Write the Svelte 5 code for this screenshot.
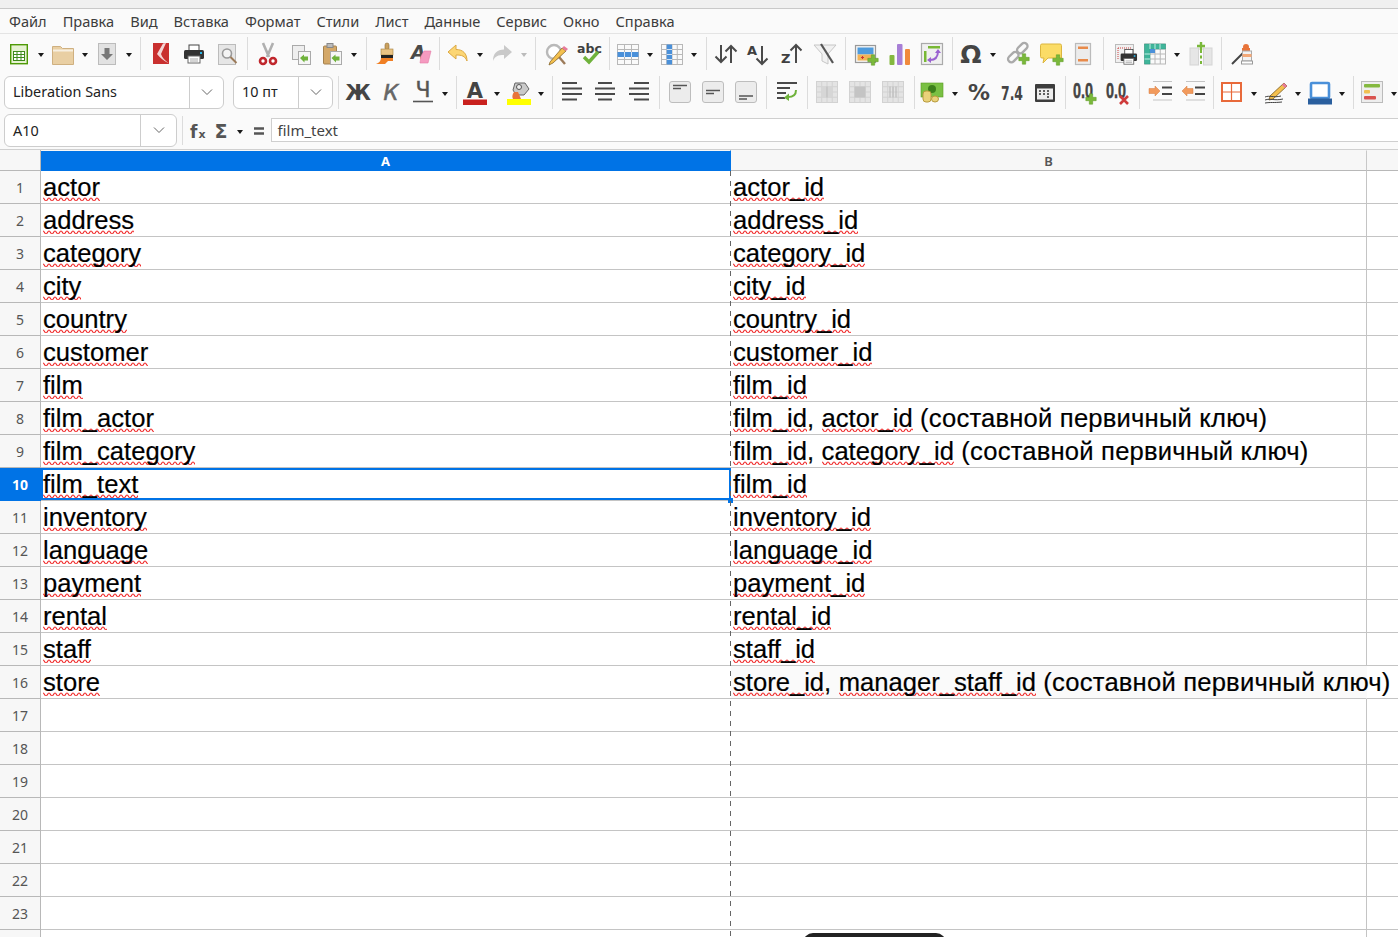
<script>
  const plus = (x, y, c = '#7ab83a') =>
    `<path d="M${x - 1.7} ${y - 5.2}h3.4v3.5h3.5v3.4h-3.5v3.5h-3.4v-3.5h-3.5v-3.4h3.5z" fill="${c}" stroke="#5d9a25" stroke-width=".5"/>`;
  const cross = (x, y) =>
    `<path d="M${x - 4} ${y - 4}l8 8M${x + 4} ${y - 4}l-8 8" stroke="#cf3b3b" stroke-width="2.6"/>`;
  const txt = (s, x, y, size, fill = '#404040', extra = '') =>
    `<text x="${x}" y="${y}" font-size="${size}" fill="${fill}" font-family="DejaVu Sans" font-weight="700" ${extra}>${s}</text>`;
  const grid = (x, y, w, h, nx, ny, c = '#b8b8b8', bg = '#fafafa') => {
    let s = `<rect x="${x}" y="${y}" width="${w}" height="${h}" fill="${bg}" stroke="${c}"/>`;
    for (let i = 1; i < nx; i++) s += `<path d="M${x + (w * i) / nx} ${y}v${h}" stroke="${c}"/>`;
    for (let i = 1; i < ny; i++) s += `<path d="M${x} ${y + (h * i) / ny}h${w}" stroke="${c}"/>`;
    return s;
  };
  const lines = (rows, c = '#4a4a4a', sw = 1.8) =>
    rows.map(([x, y, w]) => `<path d="M${x} ${y}h${w}" stroke="${c}" stroke-width="${sw}"/>`).join('');
  const pencil = `<path d="M20 3l3 3L9 19l-4 1 1-4z" fill="#f4c04e" stroke="#7a5a20" stroke-width=".8"/><path d="M20 3l3 3-2 2-3-3z" fill="#e77a9a"/>`;
  const printer = `<rect x="7" y="3" width="10" height="6" fill="#fff" stroke="#444"/><rect x="2" y="8" width="20" height="9" rx="1.5" fill="#333"/><rect x="6" y="14" width="12" height="7" fill="#fff" stroke="#666"/><rect x="18" y="10" width="2" height="2" fill="#27b5e8"/><path d="M8 17h8M8 19h8" stroke="#aaa"/>`;
  const box = (inner) =>
    `<rect x="1.5" y="1.5" width="21" height="21" rx="2.5" fill="#ececec" stroke="#bdbdbd"/>${inner}`;
  const mergeBg = (inner) => grid(1.5, 1.5, 21, 21, 4, 4, '#d2d2d2', '#e4e4e4') + inner;
  const zeros = `<text x="0" y="18" font-size="22" fill="#444" stroke="#444" stroke-width=".5" font-family="Liberation Sans" font-weight="700" textLength="20" lengthAdjust="spacingAndGlyphs">0.0</text>`;

  const icons = {
    new: `<rect x="3.7" y="2.7" width="16.6" height="19" fill="#e6f2d2" stroke="#4e9a06" stroke-width="1.4"/><rect x="6.5" y="9.5" width="11" height="9" fill="#fff" stroke="#3f8a1c"/><path d="M6.5 12.5h11M6.5 15.5h11M10 9.5v9M14 9.5v9" stroke="#3f8a1c"/>`,
    open: `<path d="M1.5 4.5h8l2 2h11v16h-21z" fill="#e9cfa3" stroke="#cfb080"/><path d="M2 8.5h20" stroke="#f7efe0" stroke-width="2"/>`,
    save: `<rect x="3.5" y="1.5" width="17" height="21" fill="#e2e2e2" stroke="#bcbcbc"/><path d="M9.5 6h5v6h3.5L12 18 6 12h3.5z" fill="#777"/>`,
    pdf: `<rect x="4" y="1" width="16" height="21" fill="#c9302f"/><path d="M14 1.500L8 12c3 4 7 7 12 9.500-4-3-7-6-8-9.500l5-11z" fill="#f4d6d6"/>`,
    print: printer,
    preview: `<rect x="3.5" y="2.5" width="17" height="20" fill="#e6e6e6" stroke="#bcbcbc"/><circle cx="12" cy="11.5" r="4.5" fill="#f4f4f4" stroke="#999" stroke-width="1.6"/><path d="M15.5 15l6 6" stroke="#9c7b5a" stroke-width="2"/>`,
    cut: `<path d="M7 1l6 14M17 1l-6 14" stroke="#b0b0b0" stroke-width="2.6"/><circle cx="7" cy="19" r="3" fill="#fff" stroke="#c0272d" stroke-width="2.6"/><circle cx="17" cy="19" r="3" fill="#fff" stroke="#c0272d" stroke-width="2.6"/>`,
    copy: `<rect x="3.5" y="3.5" width="12" height="14" fill="#eee" stroke="#aaa"/><rect x="9.5" y="9.5" width="12" height="13" fill="#f6f6f6" stroke="#aaa"/><path d="M11 16l4-3.5v2h4v4h-3.5v2z" fill="#6fb23b"/>`,
    paste: `<rect x="3.5" y="4" width="13" height="18" rx="1" fill="#d4a868" stroke="#a4814e"/><rect x="7" y="1.5" width="6" height="4" fill="#bbb" stroke="#888"/><rect x="10.5" y="9.5" width="11" height="13" fill="#f6f6f6" stroke="#aaa"/><path d="M11.5 16l4-3.5v2h4v4H16v2z" fill="#6fb23b"/>`,
    clone: `<rect x="10" y="1" width="4" height="7" rx="2" fill="#caa15f" stroke="#8d6a33" stroke-width=".6"/><rect x="6" y="7" width="12" height="6" fill="#e9c384" stroke="#a6803f" stroke-width=".6"/><rect x="6" y="13" width="12" height="3" fill="#222"/><path d="M6 16h12v3H13l-3 3H1c3-1 5-3 5-6z" fill="#f07f24"/>`,
    clear: txt('A', 3, 17, 19, '#4a4a4a', 'font-style="italic"') + `<path d="M13 14l3-5h7l-3 12h-8z" fill="#f59ac0" stroke="#e47aa6" stroke-width=".6"/>`,
    undo: `<path d="M2 10L10 3v4.5c7 0 11 4 11 11.5-2-5-5-6-11-6V17z" fill="#fcd674" stroke="#dca944"/>`,
    redo: `<path d="M22 10l-8-7v4.5C7 7.5 3 11.5 3 19c2-5 5-6 11-6v4z" fill="#c9c9c9"/>`,
    find: `<circle cx="10" cy="10" r="7" fill="#fff" stroke="#b9b9b9" stroke-width="2.4"/><path d="M15 15l6 7" stroke="#9c7b5a" stroke-width="2.4"/><path d="M6 20L18 6l4 3L9 21l-4 2z" fill="#f4c04e" stroke="#7a5a20" stroke-width=".7"/><path d="M18 6l2-2 4 3-2 2z" fill="#e77a9a"/>`,
    spell: txt('abc', 0, 11, 12.5) + `<path d="M7 15l5 5 9-10" fill="none" stroke="#6fb23b" stroke-width="3.4"/>`,
    tblrow: grid(1.5, 2.5, 21, 20, 3, 4) + `<rect x="1.5" y="10" width="21" height="5" fill="#4a90d9"/><path d="M8.5 10v5M15.5 10v5" stroke="#cfe2f7"/>`,
    tblcol: grid(1.5, 2.5, 21, 20, 4, 4) + `<rect x="6.7" y="2.5" width="5.3" height="20" fill="#4a90d9"/><path d="M6.7 7.5h5.3M6.7 12.5h5.3M6.7 17.5h5.3" stroke="#cfe2f7"/>`,
    sort: `<path d="M7 3v17M1.5 14.5L7 20l5.5-5.5M17 21V4M11.5 9.5L17 4l5.5 5.5" fill="none" stroke="#4a4a4a" stroke-width="2"/>`,
    sorta: txt('A', 0, 13, 13) + `<path d="M15 4v18M9.5 16.5L15 22l5.5-5.5" fill="none" stroke="#4a4a4a" stroke-width="2"/>`,
    sortz: txt('Z', 1, 21, 13) + `<path d="M16 21V3M10.5 8.5L16 3l5.5 5.5" fill="none" stroke="#4a4a4a" stroke-width="2"/>`,
    filter: `<path d="M1 3h22l-8 9v10l-6-3v-7z" fill="#f1f1f1" stroke="#c6c6c6"/><path d="M8 2l12 19" stroke="#555" stroke-width="2.2"/>`,
    image: `<rect x="1.5" y="3.5" width="20" height="17" fill="#f4f4f4" stroke="#999" stroke-width="1.2"/><rect x="3.5" y="5.5" width="16" height="7" fill="#4f9bdc"/><rect x="3.5" y="12.5" width="16" height="6" fill="#f3b356"/><path d="M7 15.5h3M8.5 14v3" stroke="#c33"/>` + plus(19, 18),
    chart: `<rect x="2.5" y="13" width="5" height="10" rx="1" fill="#84b83f"/><rect x="10" y="2" width="5.5" height="21" rx="1" fill="#a77fd6"/><rect x="18" y="7" width="5" height="16" rx="1" fill="#f08a3c"/>`,
    pivot: `<rect x="1.5" y="1.5" width="21" height="21" fill="#f0f0f0" stroke="#aaa" stroke-width="1.2"/><rect x="8" y="4" width="12" height="2.5" fill="#78b834"/><rect x="4" y="9" width="2.5" height="11" fill="#78b834"/><path d="M18 9c0 7-3 9-8 9" fill="none" stroke="#9a62d0" stroke-width="2"/><path d="M15 11l3-4 3 4zM11 15v6l-4-3z" fill="#9a62d0"/>`,
    omega: `<text x="12" y="21" text-anchor="middle" font-size="25" fill="#444" font-family="DejaVu Sans" font-weight="700">Ω</text>`,
    link: `<g fill="none" stroke="#aaa" stroke-width="2.4"><rect x="-3" y="-3" width="12" height="6.5" rx="3.2" transform="translate(5 17) rotate(-45)"/><rect x="-3" y="-3" width="12" height="6.5" rx="3.2" transform="translate(14 8) rotate(-45)"/></g>` + plus(18, 17),
    comment: `<path d="M3 2h18a1.5 1.5 0 0 1 1.5 1.5V16H9l-5 5 1-5H3a1.5 1.5 0 0 1-1.5-1.5v-11A1.5 1.5 0 0 1 3 2z" fill="#fbdc66" stroke="#dcb63f"/>` + plus(19, 18),
    headers: `<rect x="4.5" y="1.5" width="15" height="21" fill="#ececec" stroke="#bbb" stroke-width="1.2"/><rect x="7" y="4.5" width="10" height="2.5" fill="#e88a4a"/><rect x="7" y="17" width="10" height="2.5" fill="#e88a4a"/>`,
    printarea: `<rect x="1.5" y="2.5" width="18" height="18" fill="#f0f0f0" stroke="#bbb"/><path d="M4 6h13M4 6v12" stroke="#c44" stroke-dasharray="1 1"/><g transform="translate(5 5) scale(.82)">${printer}</g>`,
    freeze: grid(1.5, 2, 21, 20, 4, 4) + `<path d="M1.5 2h21v5H7v15H1.500z" fill="#3fb59a" stroke="#2d9a80" stroke-width=".5"/><path d="M7 2v5M12 2v5M17 2v5M1.5 12H7M1.5 17H7" stroke="#c7eee4"/><rect x="7" y="7" width="5" height="4" fill="#4a90d9"/>`,
    split: `<rect x="1" y="6" width="8.5" height="17" fill="#e6e6e6" stroke="#d4d4d4"/><rect x="14.5" y="6" width="8.5" height="17" fill="#e6e6e6" stroke="#d4d4d4"/><path d="M12 8v15" stroke="#7ab83a" stroke-width="2" stroke-dasharray="3 2.5"/><path d="M10.8 0h2.4v2.8H16v2.400h-2.800V8h-2.400V5.200H8V2.800h2.800z" fill="#7ab83a"/>`,
    draw: `<path d="M2 22L14 10" stroke="#444" stroke-width="2"/><path d="M12 6h8v3h-8z" fill="#e8743a"/><circle cx="16" cy="5" r="3" fill="#e8743a"/><rect x="12.5" y="9" width="9" height="10" fill="#f2f2f2" stroke="#aaa"/><rect x="12.5" y="12" width="9" height="3" fill="#f2a878"/><rect x="11.5" y="19" width="11" height="3" fill="#fff" stroke="#999"/>`,

    bold: `<text x="12" y="20" text-anchor="middle" font-size="21" fill="#444" font-family="DejaVu Sans" font-weight="700">Ж</text>`,
    italic: `<text x="12" y="20" text-anchor="middle" font-size="21" fill="#666" font-family="DejaVu Sans" font-weight="400" stroke="#666" stroke-width=".6" font-style="italic">К</text>`,
    under: `<text x="12" y="17" text-anchor="middle" font-size="22" fill="#555" font-family="DejaVu Sans" font-weight="400" stroke="#555" stroke-width=".4">Ч</text><path d="M2 21.5h20" stroke="#555" stroke-width="1.6"/>`,
    fcolor: `<text x="12" y="18" text-anchor="middle" font-size="21" fill="#444" font-family="DejaVu Sans" font-weight="700">A</text><rect x="0" y="19.5" width="24" height="5.5" fill="#c9211e"/>`,
    hilite: `<path d="M8 3h10l4 6-5 6H9l-3-5z" fill="#c9c9c9" stroke="#666"/><circle cx="12" cy="7" r="2.5" fill="#eee" stroke="#555"/><path d="M7 12c-2 3-2 5-1 7h8l-3-7z" fill="#e8743a"/><rect x="0" y="19" width="24" height="6" fill="#ffff00"/>`,
    aleft: lines([[2, 3, 15], [2, 8.5, 20], [2, 14, 20], [2, 19.5, 15]], '#4a4a4a', 2),
    acenter: lines([[5, 3, 14], [2, 8.5, 20], [2, 14, 20], [5, 19.5, 14]], '#4a4a4a', 2),
    aright: lines([[7, 3, 15], [2, 8.5, 20], [2, 14, 20], [7, 19.5, 15]], '#4a4a4a', 2),
    vtop: box(lines([[5, 5.5, 14], [5, 8.5, 8]], '#555', 1.5)),
    vmid: box(lines([[5, 10.5, 14], [5, 13.5, 8]], '#555', 1.5)),
    vbot: box(lines([[5, 16, 14], [5, 19, 8]], '#555', 1.5)),
    wrap: lines([[2, 3, 20], [2, 8, 13], [2, 13, 9], [2, 18, 8]], '#4a4a4a', 2) + `<path d="M21 10c0 5-3 7-8 7" fill="none" stroke="#6fb23b" stroke-width="2"/><path d="M14 13.5V21l-5-3.5z" fill="#6fb23b"/>`,
    merge1: mergeBg(`<rect x="6.5" y="6.5" width="11" height="11" fill="#d6d6d6"/><path d="M12 6.5v11" stroke="#bbb"/>`),
    merge2: mergeBg(`<rect x="6.5" y="6.5" width="11" height="11" fill="#c4c4c4"/>`),
    merge3: mergeBg(`<path d="M9 6.5v11M12 6.5v11M15 6.5v11" stroke="#b4b4b4"/>`),
    currency: `<rect x="1" y="3" width="22" height="14" fill="#79c043" stroke="#5a9a22" stroke-width=".6"/><circle cx="12" cy="9" r="4" fill="#3c7f1b"/><rect x="3" y="11" width="8" height="11" rx="3" fill="#e9d27a" stroke="#b89a3c"/><ellipse cx="15" cy="19" rx="3.5" ry="3" fill="#e9d27a" stroke="#b89a3c"/>`,
    percent: `<text x="12" y="20" text-anchor="middle" font-size="21" fill="#444" font-family="DejaVu Sans" font-weight="700" textLength="22" lengthAdjust="spacingAndGlyphs">%</text>`,
    num: `<text x="12" y="19.5" text-anchor="middle" font-size="19" fill="#444" font-family="DejaVu Sans" font-weight="700" textLength="22" lengthAdjust="spacingAndGlyphs">7.4</text>`,
    date: `<rect x="2" y="4" width="20" height="18" rx="1" fill="#3d3d3d"/><rect x="4" y="8.5" width="16" height="11" fill="#eee"/><path d="M6 11h2M10 11h2M14 11h2M6 14h2M10 14h2M14 14h2M14 17h2" stroke="#333" stroke-width="1.5"/>`,
    adddec: zeros + plus(18, 19),
    deldec: zeros + cross(18, 20),
    indent: lines([[14, 7.5, 10], [14, 14, 10]], '#444', 2) + lines([[5, 1.5, 19], [5, 20, 19]], '#c4c4c4', 1) + `<path d="M1 8.5h6V6l5 5-5 5v-2.5H1z" fill="#f29a5c" stroke="#d67a3c" stroke-width=".5"/>`,
    outdent: lines([[14, 7.5, 10], [14, 14, 10]], '#444', 2) + lines([[5, 1.5, 19], [5, 20, 19]], '#c4c4c4', 1) + `<path d="M12 8.5H6V6l-5 5 5 5v-2.5h6z" fill="#f29a5c" stroke="#d67a3c" stroke-width=".5"/>`,
    border: `<rect x="2" y="3" width="19" height="18" fill="#fff" stroke="#e8693a" stroke-width="2"/><path d="M11.5 3v18M2 12h19" stroke="#e8693a" stroke-width="1.2"/>`,
    line: pencil + `<path d="M1 17c5-2 8 1 16-1M1 20c6-2 9 1 18-1M1 23c6-1 8 0 17-1" fill="none" stroke="#444"/>`,
    bg: `<rect x="3" y="3" width="18" height="15" rx="1" fill="#fff" stroke="#4a90d9" stroke-width="2.6"/><rect x="0" y="18.5" width="24" height="6" fill="#2a5f9e"/>`,
    cond: `<rect x="1.5" y="1.5" width="21" height="21" fill="#eee" stroke="#bbb"/><rect x="4" y="4" width="16" height="3.5" rx="1" fill="#84b83f"/><rect x="4" y="10" width="6" height="3.5" rx="1" fill="#f0c050"/><rect x="4" y="16" width="12" height="3.5" rx="1" fill="#d9534f"/>`,
    fx: `<text x="4" y="18.5" font-size="17" fill="#555" font-family="DejaVu Sans" font-weight="700">f</text><text x="12.5" y="18.5" font-size="11" fill="#555" font-family="DejaVu Sans" font-weight="700">x</text>`,
    sigma: `<text x="12" y="19" text-anchor="middle" font-size="19" fill="#555" font-family="DejaVu Sans" font-weight="700">Σ</text>`,
    equals: `<path d="M7 9.5h10M7 14.5h10" stroke="#555" stroke-width="2.4"/>`
  };

  const widths = { dd: 8, ddg: 8, sep: 1 };
  function flow(list, start) {
    let end = start;
    return list.map(([name, x]) => {
      const w = widths[name] ?? 24;
      const gap = x - w / 2 - end;
      end = x + w / 2;
      return { name, w, gap };
    });
  }

  const row1 = flow([
    ['new', 19], ['dd', 41], ['open', 63], ['dd', 85], ['save', 107], ['dd', 129], ['sep', 140.5],
    ['pdf', 161], ['print', 194], ['preview', 227], ['sep', 247.5], ['cut', 268], ['copy', 301],
    ['paste', 332], ['dd', 354], ['sep', 366.5], ['clone', 387], ['clear', 420], ['sep', 439.5],
    ['undo', 458], ['dd', 480], ['redo', 502], ['ddg', 524], ['sep', 535.5], ['find', 556],
    ['spell', 589], ['sep', 609.5], ['tblrow', 628], ['dd', 650], ['tblcol', 672], ['dd', 694],
    ['sep', 706.5], ['sort', 726], ['sorta', 759], ['sortz', 792], ['filter', 825], ['sep', 845.5],
    ['image', 866], ['chart', 899], ['pivot', 932], ['sep', 952.5], ['omega', 971], ['dd', 993],
    ['link', 1018], ['comment', 1051], ['headers', 1083], ['sep', 1103.5], ['printarea', 1126],
    ['freeze', 1155], ['dd', 1177], ['split', 1201], ['sep', 1221.5], ['draw', 1242]
  ], 0);

  const row2 = flow([
    ['sep', 338.5], ['bold', 358], ['italic', 391], ['under', 423], ['dd', 445], ['sep', 456.5],
    ['fcolor', 475], ['dd', 497], ['hilite', 519], ['dd', 541], ['sep', 552.5], ['aleft', 572],
    ['acenter', 605], ['aright', 639], ['sep', 659.5], ['vtop', 680], ['vmid', 713], ['vbot', 746],
    ['sep', 766.5], ['wrap', 787], ['sep', 807.5], ['merge1', 827], ['merge2', 860], ['merge3', 893],
    ['sep', 914.5], ['currency', 932], ['dd', 955], ['percent', 979], ['num', 1012], ['date', 1045],
    ['sep', 1065.5], ['adddec', 1085], ['deldec', 1118], ['sep', 1139.5], ['indent', 1160],
    ['outdent', 1193], ['sep', 1213.5], ['border', 1232], ['dd', 1254], ['line', 1276], ['dd', 1298],
    ['bg', 1320], ['dd', 1342], ['sep', 1353.5], ['cond', 1372], ['dd', 1394]
  ], 333);

  const row3 = flow([['fx', 198], ['sigma', 221], ['dd', 240], ['equals', 259]], 183);

  const menu = ['Файл', 'Правка', 'Вид', 'Вставка', 'Формат', 'Стили', 'Лист', 'Данные', 'Сервис', 'Окно', 'Справка'];

  const pk = ' (составной первичный ключ)';
  const data = [
    ['actor', 'actor_id'], ['address', 'address_id'], ['category', 'category_id'], ['city', 'city_id'],
    ['country', 'country_id'], ['customer', 'customer_id'], ['film', 'film_id'],
    ['film_actor', 'film_id, actor_id' + pk], ['film_category', 'film_id, category_id' + pk],
    ['film_text', 'film_id'], ['inventory', 'inventory_id'], ['language', 'language_id'],
    ['payment', 'payment_id'], ['rental', 'rental_id'], ['staff', 'staff_id'],
    ['store', 'store_id, manager_staff_id' + pk]
  ];
  const rows = Array.from({ length: 24 }, (_, i) => data[i] ?? ['', '']);
  const parts = (s) => s.split(/([a-z_]+)/).filter(Boolean);
  const isWord = (s) => /^[a-z_]+$/.test(s);
</script>

{#snippet items(list)}
  {#each list as it}
    <span class="item" style="margin-left:{it.gap}px;width:{it.w}px">
      {#if it.name === 'sep'}
        <i class="sep"></i>
      {:else if it.name === 'dd' || it.name === 'ddg'}
        <i class="caret" class:off={it.name === 'ddg'}></i>
      {:else}
        <svg width="24" height="24" viewBox="0 0 24 24">{@html icons[it.name]}</svg>
      {/if}
    </span>
  {/each}
{/snippet}

{#snippet combo(text, cls)}
  <div class="combo {cls}">
    <span class="val">{text}</span>
    <span class="arrow"><svg width="12" height="8" viewBox="0 0 12 8"><path d="M1 1.5l5 5 5-5" fill="none" stroke="#666" stroke-width="1"/></svg></span>
  </div>
{/snippet}

{#snippet cellText(s)}
  {#each parts(s) as p}{#if isWord(p)}<span class="err">{p}</span>{:else}<span class="plain">{p}</span>{/if}{/each}
{/snippet}

<div class="app">
  <div class="title"></div>
  <nav class="menu">
    {#each menu as m}<span>{m}</span>{/each}
  </nav>
  <div class="bar bar1">{@render items(row1)}</div>
  <div class="bar bar2">
    {@render combo('Liberation Sans', 'font')}
    {@render combo('10 пт', 'size')}
    {@render items(row2)}
  </div>
  <div class="bar bar3">
    {@render combo('A10', 'name')}
    <span class="fsep"></span>
    {@render items(row3)}
    <div class="input">film_text</div>
  </div>

  <div class="sheet">
    <div class="row head">
      <div class="rh"></div>
      <div class="ch active">A</div>
      <div class="ch">B</div>
      <div class="ch last"></div>
    </div>
    <div class="body">
      {#each rows as r, i}
        <div class="row">
          <div class="rh" class:active={i === 9}>{i < 23 ? i + 1 : ''}</div>
          <div class="c a" class:sel={i === 9}>
            {@render cellText(r[0])}
            {#if i === 9}<i class="handle"></i>{/if}
          </div>
          <div class="c b" class:over={i === 15}>{@render cellText(r[1])}</div>
          <div class="c z"></div>
        </div>
      {/each}
      <i class="pagebreak"></i>
    </div>
    <div class="pill"></div>
  </div>
</div>

<style>
  :global(body) { margin: 0; background: #fff; }
  .app {
    width: 1398px; height: 937px; overflow: hidden; position: relative;
    font-family: "Noto Sans", sans-serif; color: #3d3d3d; background: #fafafa;
  }
  .title { height: 8px; background: #f0f0f0; border-bottom: 1px solid #c9c9c9; }
  .menu {
    height: 24px; display: flex; align-items: center; gap: 16px; padding-left: 9px;
    font-size: 14.6px; border-bottom: 1px solid #e4e4e4;
  }
  .bar { display: flex; align-items: center; }
  .bar1, .bar2 { height: 39px; }
  .bar2 svg { margin-top: -2px; }
  .bar3 { height: 38px; border-bottom: 1px solid #d0d0d0; box-sizing: border-box; }
  .item { display: flex; align-items: center; justify-content: center; flex: none; height: 100%; }
  .item svg { flex: none; overflow: visible; }
  .sep { width: 1px; height: 33px; background: #dcdcdc; }
  .caret {
    width: 0; height: 0; border-left: 3.5px solid transparent; border-right: 3.5px solid transparent;
    border-top: 4px solid #1a1a1a; margin-top: 3px;
  }
  .caret.off { border-top-color: #bbb; }
  .combo {
    display: flex; box-sizing: border-box; height: 33px; background: #fff; flex: none;
    border: 1px solid #cdcdcd; border-radius: 6px; font-size: 14.4px; color: #222; margin-top: -1px;
  }
  .combo .val { flex: 1; line-height: 30px; padding-left: 8px; white-space: nowrap; overflow: hidden; }
  .combo .arrow { flex: none; width: 33px; border-left: 1px solid #cdcdcd; display: flex; align-items: center; justify-content: center; }
  .combo .arrow svg { margin-top: 0; }
  .font { width: 220px; margin-left: 4px; }
  .size { width: 100px; margin-left: 9px; }
  .name { width: 173px; margin-left: 4px; }
  .name .arrow { width: 35px; }
  .name .val { line-height: 31px; }
  .fsep { width: 1px; height: 29px; background: #dcdcdc; margin-left: 5px; flex: none; }
  .input {
    flex: 1; box-sizing: border-box; height: 24px; margin-left: -0.5px; margin-right: -1px; background: #fff;
    border: 1px solid #cfcfcf; font-size: 15px; line-height: 23px; padding-left: 6px; color: #444;
    margin-top: -1px;
  }
  .sheet { position: relative; }
  .row {
    display: grid; grid-template-columns: 41px 690px 636px 1fr; grid-template-rows: 33px; height: 33px;
  }
  .row.head { height: 21px; grid-template-rows: 21px; }
  .rh, .ch {
    box-sizing: border-box; background: #f7f7f7; border-right: 1px solid #b8b8b8; border-bottom: 1px solid #b8b8b8;
    text-align: center; font-size: 14px; color: #555;
  }
  .rh { line-height: 34px; }
  .ch { line-height: 21px; font-size: 13px; font-weight: 600; border-right: 1px solid #c8c8c8; border-top: 1px solid #f7f7f7; }
  .ch.last { border-right: none; }
  .head .rh { border-right: 1px solid #b8b8b8; }
  .active { background: #0073e6; color: #fff; font-weight: 700; border-right-color: #0073e6; border-bottom-color: #0073e6; }
  .c {
    box-sizing: border-box; position: relative; background: #fff; border-bottom: 1px solid #c4c4c4;
    font-family: "Liberation Sans", sans-serif; font-size: 25.6px; line-height: 32px; color: #000;
    padding-left: 2px; white-space: nowrap; -webkit-text-stroke: .2px #000;
  }
  .c.b { border-right: 1px solid #c4c4c4; }
  .c.b.over { border-right-color: transparent; z-index: 1; background: transparent; }
  .plain { letter-spacing: .2px; }
  .err {
    background: url("data:image/svg+xml,%3Csvg xmlns='http://www.w3.org/2000/svg' width='6' height='5'%3E%3Cpath d='M0 1C1.500 1 1.500 4 3 4S4.500 1 6 1' fill='none' stroke='%23f02828' stroke-width='1.200'/%3E%3C/svg%3E") repeat-x 0 23.500px;
  }
  .sel { box-shadow: inset 0 0 0 2px #0073e6; z-index: 1; }
  .handle { position: absolute; right: -2px; bottom: -3px; width: 5px; height: 5px; background: #0073e6; }
  .body { position: relative; }
  .pagebreak {
    position: absolute; left: 730px; top: 0; bottom: 0; width: 1px; z-index: 2;
    background: repeating-linear-gradient(#666 0 5px, transparent 5px 10px);
  }
  .pill {
    position: absolute; left: 803px; top: 783px; width: 143px; height: 20px;
    background: #222; border-radius: 10px 10px 0 0; z-index: 3;
  }
</style>
